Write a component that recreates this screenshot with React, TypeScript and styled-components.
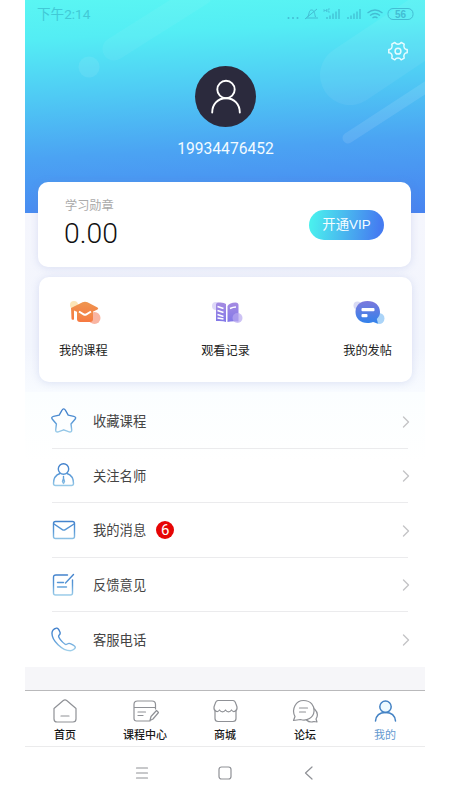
import React from "react";
import styled, { createGlobalStyle } from "styled-components";

const GlobalStyle = createGlobalStyle`
  *, *::before, *::after { box-sizing: border-box; }
  body { margin: 0; background: #fff; }
  svg { display: block; flex: none; }
`;

const latin = `Roboto, "Noto Sans CJK SC", sans-serif`;

const Phone = styled.div`
  width: 400px;
  height: 800px;
  margin-left: 25px;
  display: flex;
  flex-direction: column;
  overflow: hidden;
  background: #fff;
  font-family: "Noto Sans CJK SC", sans-serif;
  color: #222;
`;

const Hero = styled.header`
  position: relative;
  flex: none;
  height: 213px;
  background: linear-gradient(177deg, #5af6f3 0%, #54edf4 17%, #4fcaf4 42%, #4ba3f3 68%, #4883f0 100%);
`;

const Streaks = styled.svg`
  position: absolute;
  inset: 0;
`;

const StatusBar = styled.div`
  position: relative;
  display: flex;
  justify-content: space-between;
  align-items: center;
  height: 28px;
  padding: 0 11px 0 12px;
  font-family: ${latin};
  font-size: 13.6px;
  line-height: 20px;
  color: #42c9d6;
`;

const SettingsRow = styled.div`
  position: relative;
  display: flex;
  justify-content: flex-end;
  height: 38px;
  padding: 13px 17px 0 0;
`;

const Profile = styled.div`
  position: relative;
  display: flex;
  flex-direction: column;
  align-items: center;
`;

const Avatar = styled.div`
  display: grid;
  place-items: center;
  width: 61px;
  height: 61px;
  margin-left: 1px;
  border-radius: 50%;
  background: #2b2a3d;
`;

const Account = styled.div`
  margin-top: 10px;
  margin-left: 1px;
  font-family: ${latin};
  font-size: 15.6px;
  line-height: 24px;
  color: #f2fbff;
`;

const Cards = styled.section`
  flex: none;
  height: 179px;
  display: flex;
  flex-direction: column;
  background: linear-gradient(#f5f6fd, #f2f5fd 75%, #f8fbff);
`;

const Card = styled.div`
  position: relative;
  background: #fff;
  border-radius: 10px;
  box-shadow: 0 1px 8px rgba(110, 130, 200, 0.2);
`;

const BalanceCard = styled(Card)`
  display: flex;
  justify-content: space-between;
  height: 85px;
  margin: -31px 14px 0 13px;
  padding: 14px 27px 0 27px;
`;

const BalanceLabel = styled.div`
  font-size: 12.2px;
  line-height: 18px;
  color: #aaa;
`;

const Balance = styled.div`
  margin-top: 3px;
  margin-left: -1px;
  font-family: ${latin};
  font-size: 28.3px;
  line-height: 34px;
  font-weight: 300;
  color: #111;
`;

const VipButton = styled.button`
  width: 75px;
  height: 30px;
  margin-top: 14px;
  padding: 0 0 1px;
  border: 0;
  border-radius: 15px;
  background: linear-gradient(98deg, #4aefee 5%, #49b7ef 48%, #457cf1 92%);
  color: #f5fdff;
  font-family: "Liberation Sans", "Noto Sans CJK SC", sans-serif;
  font-size: 13.4px;
  line-height: 29px;
  white-space: nowrap;
`;

const ShortcutCard = styled(Card)`
  display: flex;
  justify-content: space-between;
  height: 105px;
  margin: 10px 13px 0 14px;
  padding: 24px 20px 0 20px;
`;

const Shortcut = styled.div`
  display: flex;
  flex-direction: column;
  align-items: center;
  font-size: 12.2px;
  line-height: 18px;

  svg { margin: 0 0 17px 3px; }
`;

const Menu = styled.ul`
  flex: none;
  height: 275px;
  margin: 0;
  padding: 2px 17px 0 27px;
  list-style: none;
  background: linear-gradient(#fbfeff, #fff 70px);
`;

const MenuItem = styled.li`
  display: flex;
  align-items: center;
  height: 54.5px;
  border-bottom: 1px solid #ebebed;
  font-size: 13.3px;
  color: #444;

  &:last-child { border-bottom: 0; }
  > svg:first-child { margin: 0 16px 0 -1px; }
  > svg:last-child { margin: 2px -3px 0 auto; }
`;

const Badge = styled.span`
  display: grid;
  place-items: center;
  width: 18px;
  height: 18px;
  margin-left: 10px;
  border-radius: 50%;
  background: #e60505;
  color: #fff;
  font-family: ${latin};
  font-size: 15px;
  line-height: 18px;
`;

const Spacer = styled.div`
  flex: none;
  height: 23px;
  background: #f6f6f9;
`;

const TabBar = styled.nav`
  flex: none;
  display: grid;
  grid-template-columns: repeat(5, 80px);
  height: 57px;
  border-top: 1px solid #b9b9bb;
  border-bottom: 1px solid #ebebec;
`;

const Tab = styled.div<{ $active?: boolean }>`
  display: flex;
  flex-direction: column;
  align-items: center;
  padding-top: 7px;
  font-size: 11px;
  font-weight: ${(p) => (p.$active ? 400 : 500)};
  line-height: 16px;
  color: ${(p) => (p.$active ? "#6499cf" : "#1a1a1a")};

  svg { margin-bottom: 2px; }
`;

const SystemNav = styled.div`
  flex: 1;
  display: flex;
  align-items: center;
  padding: 0 0 1px 110px;
  gap: 69px;
`;

const Line = ({ w = 26, h = 26, color = "#8f9196", width = 1.2, children }: {
  w?: number; h?: number; color?: string; width?: number; children: React.ReactNode;
}) => (
  <svg width={w} height={h} viewBox={`0 0 ${w} ${h}`} fill="none" stroke={color} strokeWidth={width} strokeLinecap="round" strokeLinejoin="round">
    {children}
  </svg>
);

const Gradients = () => (
  <svg width="0" height="0" aria-hidden="true">
    <defs>
      <linearGradient id="row" gradientUnits="userSpaceOnUse" x1="0" y1="0" x2="0" y2="26">
        <stop offset="0.1" stopColor="#3f7fcb" />
        <stop offset="0.55" stopColor="#5b9bd8" />
        <stop offset="1" stopColor="#a8d6ec" />
      </linearGradient>
      <linearGradient id="cap" x1="0" y1="0" x2="0" y2="1">
        <stop stopColor="#ee9650" /><stop offset="1" stopColor="#f77840" />
      </linearGradient>
      <linearGradient id="book" x1="0" y1="0" x2="0" y2="1">
        <stop stopColor="#a58be2" /><stop offset="1" stopColor="#8278e8" />
      </linearGradient>
      <linearGradient id="chat" x1="0" y1="0" x2="0" y2="1">
        <stop stopColor="#7c78dc" /><stop offset="1" stopColor="#3182eb" />
      </linearGradient>
    </defs>
  </svg>
);

const StatusIcons = () => (
  <svg width="127" height="16" viewBox="-2 0 127 16" fill="none" stroke="#43bdd3" strokeWidth="1">
    <g fill="#43bdd3" stroke="none">
      <circle cx="-.5" cy="12" r="1" /><circle cx="4" cy="12" r="1" /><circle cx="8.500" cy="12" r="1" />
    </g>
    <path d="M17 12h12M18.500 11c2-2 1-7 4-7s3 4 4 7M16 13L28 3" />
    <path d="M35 3v3M37.500 3v3M35 4.500h2.500M39 3h2M39 3v3h2" strokeWidth=".7" />
    <path d="M38 13v-2M41 13V9.500M44 13V7.500M47 13V5.500M50 13V3" strokeWidth="1.300" />
    <path d="M59 13v-2M62 13V9.500M65 13V7.500M68 13V5.500M71 13V3" strokeWidth="1.300" />
    <path d="M78.500 7q7.500-6 15 0M81 9.500q5-4 10 0M83.500 12q2.500-2 5 0" strokeWidth="1.300" />
    <rect x="99" y="2.500" width="25" height="11" rx="5" />
    <text x="111.500" y="11.600" textAnchor="middle" fontSize="10" fontWeight="700" fontFamily="Liberation Sans" fill="#43bdd3" stroke="none">56</text>
  </svg>
);

const CapIcon = () => (
  <svg width="32" height="23" viewBox="0 0 32 23">
    <circle cx="5" cy="4" r="4" fill="#fbe5b7" />
    <circle cx="25.500" cy="17" r="6" fill="#f9b5a2" />
    <path d="M8 8h16v10q0 3-3 3H11q-3 0-3-3z" fill="url(#cap)" />
    <path d="M2 7L13.500 1.300q2.500-1.200 5 0L28.500 6.500q1.500 1 0 2L18 13.500q-2 1-4 0L5 9.500v9q-2.500 1-2.500-1z" fill="url(#cap)" />
    <path d="M10 10.500l5 3q1 .5 2 0l5-3" fill="none" stroke="#fff" strokeWidth="2" />
  </svg>
);

const BookIcon = () => (
  <svg width="32" height="23" viewBox="0 0 32 23">
    <circle cx="5" cy="5" r="4" fill="#ded8f8" />
    <path d="M5 4q0-2.500 2.500-2.500Q13 1 15 3v18q-3-1.500-10-1z" fill="url(#book)" />
    <path d="M16.500 5q2-3.500 8-3.500 3 0 3 2.500v16.500q-7-.500-11 .500z" fill="url(#book)" />
    <circle cx="26.500" cy="17" r="5" fill="#b8a8f0" fillOpacity=".7" />
    <path d="M6.500 5.500l6 2M6.500 9.500l6 2M6.500 13.500l6 2M6.500 17l6 1M19 7.500q3-1.500 6-1.500" stroke="#fff" strokeWidth="1.500" fill="none" />
  </svg>
);

const ChatIcon = () => (
  <svg width="32" height="23" viewBox="0 0 32 23">
    <circle cx="4.500" cy="4.500" r="4" fill="#d9dbf4" />
    <circle cx="26" cy="17.500" r="5.500" fill="#abd4f8" />
    <path d="M14.500 0C7 0 2.500 4.500 2.500 11s5 11 12 11c2 0 4-.300 5.500-1l5 1.500-1.200-4.500C26 15.500 27 14 27 11 27 4.500 22 0 14.500 0z" fill="url(#chat)" />
    <rect x="8.500" y="7" width="13" height="3.200" rx="1" fill="#fff" />
    <rect x="8.500" y="13" width="6" height="3.200" rx="1" fill="#fff" />
  </svg>
);

const rowProps = { color: "url(#row)", width: 1.4 };
const rows = [
  { label: "收藏课程", icon: <path d="M10.800 2.500q1.900-3.200 3.800 0l2.600 4.600 5.600 1.300q3 .800 1 3.100L20 16l.700 5.800q.100 3-2.600 2l-5.400-2-5.400 2q-2.700 1-2.600-2l.700-5.800-3.800-4.500q-2-2.300 1-3.100l5.600-1.300z" /> },
  { label: "关注名师", icon: <><circle cx="12.500" cy="7" r="5.200" /><path d="M9 11.500C4.500 13 2.500 17 2.500 21.500q0 2 2 2h16q2 0 2-2c0-4.500-2-8.500-6.500-10" /><path d="M12.500 14.500v2l-1 3 1 2 1-2-1-3" /></> },
  { label: "我的消息", badge: "6", icon: <><rect x="2.500" y="4.500" width="21" height="17" rx="2" /><path d="M3 7l8.300 5.600q1.500 1 3 0L23 7" /></> },
  { label: "反馈意见", icon: <><path d="M16.500 4H5q-2.500 0-2.500 2.500v15.500q0 2 2 2h15q2 0 2-2V9M6.500 11.500h6M6.500 16h9M14.500 12L22.500 3.500" /></> },
  { label: "客服电话", icon: <path d="M5.300 2.200c1.400-.600 2.500 1.200 3.700 4 .700 1.700-.200 2.500-1.200 3.400-1 1.300 2.500 6 6.300 8.700 1.400 1 2.500-1.100 4-.900 1.800.300 6 2.400 6.200 3.800.200 1.500-3 3.500-5 3.500C11.500 24.700.500 14.500 1 6.800c.200-2.300 2.400-4 4.300-4.600z" /> },
];

const tabs = [
  { label: "首页", icon: <><path d="M2 10.500L11 2.700q2-1.500 4 0l9 7.800V21q0 3-3 3H5q-3 0-3-3z" /><path d="M9 18h8" /></> },
  { label: "课程中心", icon: <><path d="M18 23H4.500Q2 23 2 20.500v-14Q2 3 5.500 3H20q3.500 0 3.500 3.500V11M2 9.500h21.500M6 14h7.500M6 17.500h5M18 22.500l1-4 5.500-6 2 2-5.500 6.500z" /></> },
  { label: "商城", icon: <><path d="M3 13v7.500Q3 23.500 6 23.500h15q3 0 3-3V13" /><path d="M6 2.500h15q2 0 3 3.500l1 3c.500 4-3.500 6-5.500 3-1.500 2.500-4.500 2.500-6 0-1.500 2.500-4.500 2.500-6 0-2 3-6 1-5.500-3l1-3q1-3.500 3-3.500z" /></> },
  { label: "论坛", icon: <><path d="M1.500 22.500L3 18.500C-1 11 4 2.500 11.500 2.500S22.500 8 22 13.500c-.500 6-7 10-13.500 8z" /><path d="M7.500 10h8M7.500 14h6M22.500 11c3 3 3.500 7 1.500 10l1 3-3-.500c-3 1-5.500.500-7.500-1.500" /></> },
  { label: "我的", active: true, icon: <><circle cx="13.500" cy="8.800" r="5.700" fill="#eefaff" /><path d="M3.500 23c.500-5 4-8.500 10-8.500S23 18 23.500 23" /></> },
];

export default function App() {
  return (
    <>
      <GlobalStyle />
      <Phone>
        <Hero>
          <Streaks width="400" height="213" viewBox="0 0 400 213">
            <g strokeLinecap="round" stroke="#fff" fill="none">
              <path d="M89 49L176-6" strokeWidth="23" strokeOpacity=".05" />
              <path d="M64 67h.1" strokeWidth="21" strokeOpacity=".08" />
              <path d="M325 75L430 5" strokeWidth="60" strokeOpacity=".06" />
              <path d="M323 138L412 80" strokeWidth="11" strokeOpacity=".1" />
            </g>
          </Streaks>
          <StatusBar><span>下午2:14</span><StatusIcons /></StatusBar>
          <SettingsRow>
            <Line w={20} h={20} color="#e6fcff" width={1.5}>
              <path d="M6.800 1.500q1.200 1.700 3.200 1.700t3.200-1.700l3 1.700q-.900 2.200.200 3.900T19.200 8.500v3.300q-1.800-.200-2.800 1.400t-.200 3.900l-3 1.700Q12 17 10 17t-3.200 1.800l-3-1.700q.800-2.300-.200-3.900T.800 11.800V8.500q1.700.300 2.800-1.400t.200-3.900z" />
              <circle cx="10" cy="10.200" r="2.900" />
            </Line>
          </SettingsRow>
          <Profile>
            <Avatar>
              <Line w={38} h={38} color="#fff" width={1.9}>
                <circle cx="19" cy="11.500" r="8.700" />
                <path d="M5.200 34.500c0-8 5.300-14.300 13.800-14.300s13.800 6.300 13.800 14.300" />
              </Line>
            </Avatar>
            <Account>19934476452</Account>
          </Profile>
        </Hero>
        <Cards>
          <BalanceCard>
            <div>
              <BalanceLabel>学习勋章</BalanceLabel>
              <Balance>0.00</Balance>
            </div>
            <VipButton>开通VIP</VipButton>
          </BalanceCard>
          <ShortcutCard>
            <Shortcut><CapIcon />我的课程</Shortcut>
            <Shortcut><BookIcon />观看记录</Shortcut>
            <Shortcut><ChatIcon />我的发帖</Shortcut>
          </ShortcutCard>
        </Cards>
        <Menu>
          {rows.map((row) => (
            <MenuItem key={row.label}>
              <Line {...rowProps}>{row.icon}</Line>
              <span>{row.label}</span>
              {row.badge && <Badge>{row.badge}</Badge>}
              <Line w={10} h={14} color="#c4c4c6" width={1.4}><path d="M2.500 2L7.500 7l-5 5" /></Line>
            </MenuItem>
          ))}
        </Menu>
        <Spacer />
        <TabBar>
          {tabs.map((tab) => (
            <Tab key={tab.label} $active={tab.active}>
              <Line w={27} color={tab.active ? "#4382c4" : undefined} width={tab.active ? 1.5 : 1.2}>{tab.icon}</Line>
              {tab.label}
            </Tab>
          ))}
        </TabBar>
        <SystemNav>
          <Line w={14} h={14}><path d="M1.500 2h11M1.500 7h11M1.500 12h11" /></Line>
          <Line w={14} h={14}><rect x="1" y="1" width="12" height="12" rx="2.500" /></Line>
          <Line w={14} h={14}><path d="M11 1L4.500 7l6.500 6" /></Line>
        </SystemNav>
      </Phone>
      <Gradients />
    </>
  );
}
